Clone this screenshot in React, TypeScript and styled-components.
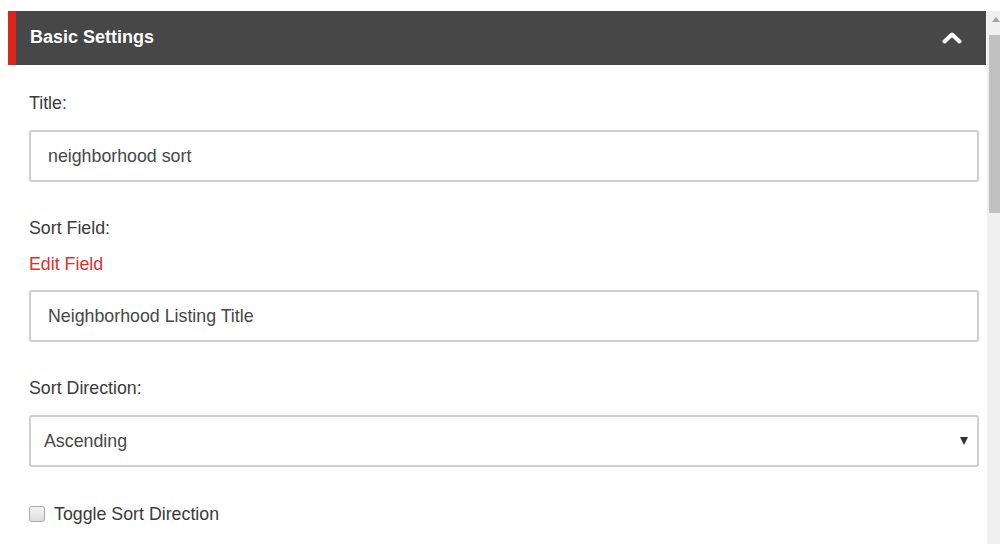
import React from 'react';
import styled, {createGlobalStyle} from 'styled-components';

const GlobalStyle = createGlobalStyle`
  html, body {
    margin: 0;
    padding: 0;
    background: #fff;
    font-family: "Liberation Sans", Arial, sans-serif;
  }
`;

const Page = styled.div`
  display: flex;
  height: 544px;
  padding: 11px 0 0 8px;
  box-sizing: border-box;
  overflow: hidden;
`;

const Panel = styled.section`
  width: 978px;
  flex-shrink: 0;
  display: flex;
  flex-direction: column;
`;

const Header = styled.div`
  height: 54px;
  display: flex;
  align-items: center;
  justify-content: space-between;
  background: #474747;
  border-left: 8px solid #d8261f;
  padding: 0 24px 1px 14px;
  box-sizing: border-box;
`;

const HeaderTitle = styled.h2`
  margin: 0;
  color: #fff;
  font-size: 18px;
  font-weight: 700;
`;

const Body = styled.div`
  padding: 27px 7px 0 21px;
  display: flex;
  flex-direction: column;
`;

const Group = styled.div<{ $gap?: number }>`
  display: flex;
  flex-direction: column;
  margin-bottom: ${p => p.$gap ?? 35}px;
`;

const Label = styled.label`
  font-size: 17.8px;
  line-height: 22px;
  color: #3a3a3a;
  margin-bottom: 16px;
`;

const EditLink = styled.a`
  font-size: 17.8px;
  line-height: 22px;
  color: #dc3129;
  text-decoration: none;
  margin: -2px 0 15px;
  cursor: pointer;
`;

const Input = styled.input`
  height: 52px;
  border: 2px solid #cfcfcf;
  border-radius: 3px;
  padding: 0 17px;
  font-family: inherit;
  font-size: 17.8px;
  color: #474747;
  box-sizing: border-box;
  outline: none;
  background: #fff;
`;

const SelectWrap = styled.div`
  position: relative;
  display: flex;
`;

const Select = styled.select`
  flex: 1;
  height: 52px;
  appearance: none;
  border: 2px solid #cfcfcf;
  border-radius: 3px;
  padding: 0 13px;
  font-family: inherit;
  font-size: 17.8px;
  color: #474747;
  background: #fff;
  outline: none;
`;

const Caret = styled.span`
  position: absolute;
  right: 11px;
  top: 22px;
  width: 0;
  height: 0;
  border-left: 4.5px solid transparent;
  border-right: 4.5px solid transparent;
  border-top: 8px solid #333;
  pointer-events: none;
`;

const CheckRow = styled.label`
  display: flex;
  align-items: center;
  gap: 9px;
  height: 22px;
  font-size: 17.8px;
  color: #3a3a3a;
`;

const CheckBox = styled.span`
  width: 14px;
  height: 14px;
  border: 1px solid #a9a9a9;
  border-radius: 3px;
  background: linear-gradient(#f4f4f4, #dedede);
`;

const Scrollbar = styled.div`
  width: 13px;
  margin-left: 1px;
  background: #f0f0f0;
  display: flex;
  flex-direction: column;
  align-items: flex-end;
`;

const ScrollArrow = styled.div`
  width: 13px;
  height: 17px;
  display: flex;
  align-items: center;
  justify-content: center;
  padding-left: 5px;
  box-sizing: border-box;
  &::before {
    content: '';
    border-left: 4px solid transparent;
    border-right: 4px solid transparent;
    border-bottom: 5px solid #a3a3a3;
  }
`;

const Thumb = styled.div`
  width: 11px;
  height: 178px;
  margin-top: 7px;
  background: #c1c1c1;
`;

const ChevronUp = () => (
	<svg width="20" height="14" viewBox="0 0 20 14">
		<path d="M2.5 10.5 L10 3.5 L17.5 10.5" fill="none" stroke="#fff" strokeWidth="4" strokeLinejoin="round" strokeLinecap="round" />
	</svg>
);

export default function App() {
	return (
		<>
			<GlobalStyle />
			<Page>
				<Panel>
					<Header>
						<HeaderTitle>Basic Settings</HeaderTitle>
						<ChevronUp />
					</Header>
					<Body>
						<Group>
							<Label>Title:</Label>
							<Input defaultValue="neighborhood sort" />
						</Group>
						<Group>
							<Label>Sort Field:</Label>
							<EditLink>Edit Field</EditLink>
							<Input defaultValue="Neighborhood Listing Title" />
						</Group>
						<Group $gap={36}>
							<Label>Sort Direction:</Label>
							<SelectWrap>
								<Select defaultValue="asc">
									<option value="asc">Ascending</option>
									<option value="desc">Descending</option>
								</Select>
								<Caret />
							</SelectWrap>
						</Group>
						<CheckRow>
							<CheckBox />
							Toggle Sort Direction
						</CheckRow>
					</Body>
				</Panel>
				<Scrollbar>
					<ScrollArrow />
					<Thumb />
				</Scrollbar>
			</Page>
		</>
	);
}
